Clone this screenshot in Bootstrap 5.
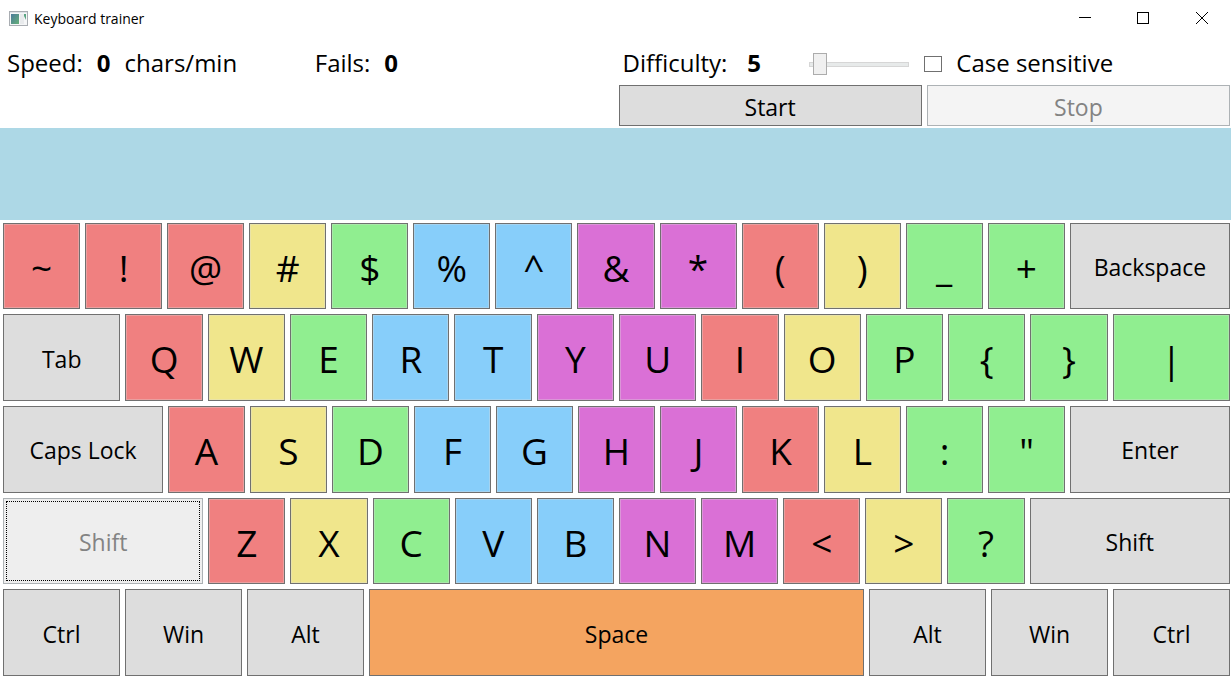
<!DOCTYPE html>
<html lang="en">
<head>
<meta charset="utf-8">
<meta name="viewport" content="width=device-width, initial-scale=1">
<title>Keyboard trainer</title>
<link rel="stylesheet" href="https://cdn.jsdelivr.net/npm/bootstrap@5.3.0/dist/css/bootstrap.min.css">
<style>
  body { font-family: "Open Sans", "Noto Sans", sans-serif; font-size: 24px; line-height: 32px; color: #000; background: #fff; }
  .titlebar { height: 37px; font-size: 14px; line-height: 20px; padding-left: 9px; gap: 5px; }
  .win-btns { margin-top: -1px; }
  .win-btn { width: 58px; height: 36px; padding: 0; border: 0; background: none; line-height: 0; }
  .share-1 { flex: 1 1 0; min-height: 0; }
  .share-5 { flex: 5 1 0; min-height: 0; }
  .readout { height: 45px; padding: 7px 0 0 7px; }
  .count { margin: 0 14px; }
  .actions { gap: 5px; padding: 3px 1px 2px 3px; }
  .typing-band { background: #add8e6; }
  .level-value { width: 62px; margin-left: 20px; }

  .face { color: #000; background: #ddd; border: 1px solid #707070; border-radius: 0; padding: 2px 0 0; min-width: 0; font-size: 23px; line-height: 32px; }
  .face:hover { color: #000; background: #bee6fd; border-color: #3c7fb1; }
  .face:disabled { color: #838383; background: #f4f4f4; border-color: #adb2b5; opacity: 1; }

  .level { appearance: none; width: 100px; height: 22px; margin: 3px 15px 0 0; background: none; }
  .level::-webkit-slider-runnable-track { height: 5px; background: #e7eaea; border: 1px solid #d6d6d6; }
  .level::-webkit-slider-thumb { appearance: none; width: 14px; height: 22px; margin-top: -10px; background: #f0f0f0; border: 1px solid #acacac; }
  .tick { appearance: none; width: 18px; height: 16px; margin: 1px 14px 0 0; background: #fff; border: 1px solid #707070; }
  .tick:checked { background: #707070; box-shadow: inset 0 0 0 3px #fff; }

  .keyboard { gap: 5px; padding: 3px 1px 1px 3px; }
  .key-row { gap: 5px; }
  .key { flex: 75 1 0; }
  .key.glyph { font-size: 37px; line-height: 48px; padding-top: 3px; box-shadow: inset 0 0 0 1px rgba(221, 221, 221, .35); }
  .w-tab { flex-grow: 115; }
  .w-caps { flex-grow: 158; }
  .w-shift { flex-grow: 198; }
  .w-space { flex-grow: 493; }
  .key.red { background: #f08080; }
  .key.yellow { background: #f0e68c; }
  .key.green { background: #90ee90; }
  .key.blue { background: #87cefa; }
  .key.violet { background: #da70d6; }
  .key.orange { background: #f4a460; }
  .key.held:disabled { background: #eee; outline: 1px dotted #000; outline-offset: -4px; }
</style>
</head>
<body>
<div class="vh-100 d-flex flex-column overflow-hidden">
  <header class="titlebar d-flex align-items-center flex-shrink-0">
    <svg width="20" height="16" viewBox="0 0 20 16" aria-hidden="true">
      <defs><linearGradient id="pane" x1="0" y1="0" x2="1" y2="1"><stop offset="0" stop-color="#4b7b9b"/><stop offset="1" stop-color="#66b078"/></linearGradient></defs>
      <rect x=".5" y=".5" width="18" height="14" fill="#f5f6f7" stroke="#a9adb2"/>
      <rect x="1" y="1" width="17" height="1" fill="#dfe3e8"/>
      <rect x="2" y="3" width="8" height="10" fill="url(#pane)"/>
      <rect x="11" y="3" width="4" height="10" fill="#e8eaec"/>
      <path d="M15 3H17V9L15 5Z" fill="#5aa583"/>
    </svg>
    <span class="me-auto">Keyboard trainer</span>
    <div class="win-btns d-flex">
      <button type="button" class="win-btn" aria-label="Minimize"><svg width="14" height="12" viewBox="0 0 14 12"><path d="M0 5.500H12" stroke="#000"/></svg></button>
      <button type="button" class="win-btn" aria-label="Maximize"><svg width="14" height="12" viewBox="0 0 14 12"><rect x=".5" y=".5" width="11" height="11" fill="none" stroke="#000"/></svg></button>
      <button type="button" class="win-btn" aria-label="Close"><svg width="12" height="12" viewBox="0 0 12 12"><path d="M0 0L12 12M12 0L0 12" stroke="#000"/></svg></button>
    </div>
  </header>

  <section class="share-1 row g-0">
    <div class="col-3 readout d-flex align-items-center"><span>Speed:</span><b class="count">0</b><span>chars/min</span></div>
    <div class="col-3 readout d-flex align-items-center"><span>Fails:</span><b class="count">0</b></div>
    <div class="col-6 d-flex flex-column">
      <div class="readout d-flex align-items-center">
        <label for="level">Difficulty:</label><b class="level-value">5</b>
        <input type="range" class="level" id="level" min="1" max="100" value="4">
        <input type="checkbox" class="tick" id="case"><label for="case">Case sensitive</label>
      </div>
      <div class="actions d-flex flex-grow-1">
        <button type="button" class="btn face share-1">Start</button>
        <button type="button" class="btn face share-1" disabled>Stop</button>
      </div>
    </div>
  </section>

  <div class="typing-band share-1"></div>

  <main class="share-5 d-flex">
    <div class="keyboard w-100 d-flex flex-column">
    <div class="key-row share-1 d-flex">
      <button type="button" class="btn face key glyph red">~</button>
      <button type="button" class="btn face key glyph red">!</button>
      <button type="button" class="btn face key glyph red">@</button>
      <button type="button" class="btn face key glyph yellow">#</button>
      <button type="button" class="btn face key glyph green">$</button>
      <button type="button" class="btn face key glyph blue">%</button>
      <button type="button" class="btn face key glyph blue">^</button>
      <button type="button" class="btn face key glyph violet">&amp;</button>
      <button type="button" class="btn face key glyph violet">*</button>
      <button type="button" class="btn face key glyph red">(</button>
      <button type="button" class="btn face key glyph yellow">)</button>
      <button type="button" class="btn face key glyph green">_</button>
      <button type="button" class="btn face key glyph green">+</button>
      <button type="button" class="btn face key w-caps">Backspace</button>
    </div>
    <div class="key-row share-1 d-flex">
      <button type="button" class="btn face key w-tab">Tab</button>
      <button type="button" class="btn face key glyph red">Q</button>
      <button type="button" class="btn face key glyph yellow">W</button>
      <button type="button" class="btn face key glyph green">E</button>
      <button type="button" class="btn face key glyph blue">R</button>
      <button type="button" class="btn face key glyph blue">T</button>
      <button type="button" class="btn face key glyph violet">Y</button>
      <button type="button" class="btn face key glyph violet">U</button>
      <button type="button" class="btn face key glyph red">I</button>
      <button type="button" class="btn face key glyph yellow">O</button>
      <button type="button" class="btn face key glyph green">P</button>
      <button type="button" class="btn face key glyph green">{</button>
      <button type="button" class="btn face key glyph green">}</button>
      <button type="button" class="btn face key glyph w-tab green">|</button>
    </div>
    <div class="key-row share-1 d-flex">
      <button type="button" class="btn face key w-caps">Caps Lock</button>
      <button type="button" class="btn face key glyph red">A</button>
      <button type="button" class="btn face key glyph yellow">S</button>
      <button type="button" class="btn face key glyph green">D</button>
      <button type="button" class="btn face key glyph blue">F</button>
      <button type="button" class="btn face key glyph blue">G</button>
      <button type="button" class="btn face key glyph violet">H</button>
      <button type="button" class="btn face key glyph violet">J</button>
      <button type="button" class="btn face key glyph red">K</button>
      <button type="button" class="btn face key glyph yellow">L</button>
      <button type="button" class="btn face key glyph green">:</button>
      <button type="button" class="btn face key glyph green">"</button>
      <button type="button" class="btn face key w-caps">Enter</button>
    </div>
    <div class="key-row share-1 d-flex">
      <button type="button" class="btn face key w-shift held" disabled>Shift</button>
      <button type="button" class="btn face key glyph red">Z</button>
      <button type="button" class="btn face key glyph yellow">X</button>
      <button type="button" class="btn face key glyph green">C</button>
      <button type="button" class="btn face key glyph blue">V</button>
      <button type="button" class="btn face key glyph blue">B</button>
      <button type="button" class="btn face key glyph violet">N</button>
      <button type="button" class="btn face key glyph violet">M</button>
      <button type="button" class="btn face key glyph red">&lt;</button>
      <button type="button" class="btn face key glyph yellow">&gt;</button>
      <button type="button" class="btn face key glyph green">?</button>
      <button type="button" class="btn face key w-shift">Shift</button>
    </div>
    <div class="key-row share-1 d-flex">
      <button type="button" class="btn face key w-tab">Ctrl</button>
      <button type="button" class="btn face key w-tab">Win</button>
      <button type="button" class="btn face key w-tab">Alt</button>
      <button type="button" class="btn face key w-space orange">Space</button>
      <button type="button" class="btn face key w-tab">Alt</button>
      <button type="button" class="btn face key w-tab">Win</button>
      <button type="button" class="btn face key w-tab">Ctrl</button>
    </div>
    </div>
  </main>
</div>
<script src="https://cdn.jsdelivr.net/npm/bootstrap@5.3.0/dist/js/bootstrap.bundle.min.js"></script>
</body>
</html>
